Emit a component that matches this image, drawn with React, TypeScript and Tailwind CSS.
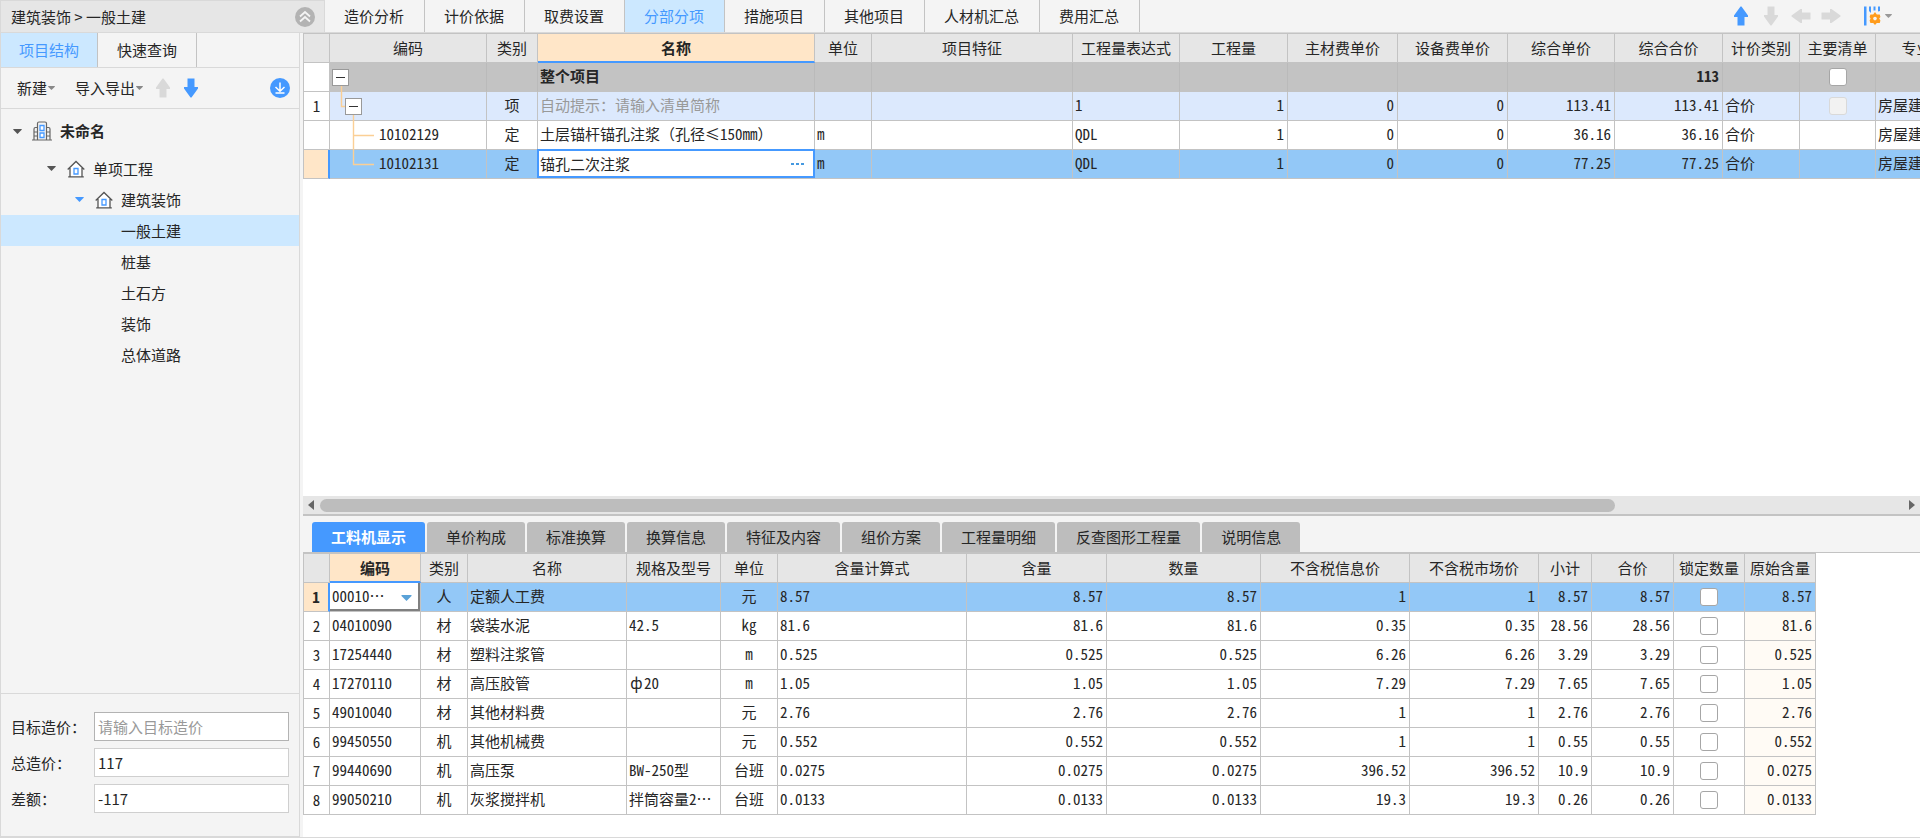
import { useState } from 'react';
import type { ReactNode } from 'react';

type Align = 'left' | 'center' | 'right';

type Column = {
    title: string;
    width: string;
    align: Align;
};

// Column definitions
const billColumns: Column[] = [
    { title: '编码', width: 'w-[157px]', align: 'left' },
    { title: '类别', width: 'w-[51px]', align: 'center' },
    { title: '名称', width: 'w-[277px]', align: 'left' },
    { title: '单位', width: 'w-[57px]', align: 'left' },
    { title: '项目特征', width: 'w-[201px]', align: 'left' },
    { title: '工程量表达式', width: 'w-[107px]', align: 'left' },
    { title: '工程量', width: 'w-[108px]', align: 'right' },
    { title: '主材费单价', width: 'w-[110px]', align: 'right' },
    { title: '设备费单价', width: 'w-[110px]', align: 'right' },
    { title: '综合单价', width: 'w-[107px]', align: 'right' },
    { title: '综合合价', width: 'w-[108px]', align: 'right' },
    { title: '计价类别', width: 'w-[77px]', align: 'left' },
    { title: '主要清单', width: 'w-[76px]', align: 'center' },
    { title: '专业', width: 'w-[82px]', align: 'left' },
];

const detailColumns: Column[] = [
    { title: '编码', width: 'w-[91px]', align: 'left' },
    { title: '类别', width: 'w-[47px]', align: 'center' },
    { title: '名称', width: 'w-[159px]', align: 'left' },
    { title: '规格及型号', width: 'w-[94px]', align: 'left' },
    { title: '单位', width: 'w-[57px]', align: 'center' },
    { title: '含量计算式', width: 'w-[189px]', align: 'left' },
    { title: '含量', width: 'w-[140px]', align: 'right' },
    { title: '数量', width: 'w-[154px]', align: 'right' },
    { title: '不含税信息价', width: 'w-[149px]', align: 'right' },
    { title: '不含税市场价', width: 'w-[129px]', align: 'right' },
    { title: '小计', width: 'w-[53px]', align: 'right' },
    { title: '合价', width: 'w-[82px]', align: 'right' },
    { title: '锁定数量', width: 'w-[71px]', align: 'center' },
    { title: '原始含量', width: 'w-[71px]', align: 'right' },
];

// Table data
const billRows = [
    { no: '', cells: ['', '', '整个项目', '', '', '', '', '', '', '', '113', '', '', ''] },
    { no: '1', cells: ['', '项', '自动提示：请输入清单简称', '', '', '1', '1', '0', '0', '113.41', '113.41', '合价', '', '房屋建筑'] },
    { no: '', cells: ['10102129', '定', '土层锚杆锚孔注浆（孔径≤150mm）', 'm', '', 'QDL', '1', '0', '0', '36.16', '36.16', '合价', '', '房屋建筑'] },
    { no: '', cells: ['10102131', '定', '锚孔二次注浆', 'm', '', 'QDL', '1', '0', '0', '77.25', '77.25', '合价', '', '房屋建筑'] },
];

const detailRows = [
    ['00010…', '人', '定额人工费', '', '元', '8.57', '8.57', '8.57', '1', '1', '8.57', '8.57', '', '8.57'],
    ['04010090', '材', '袋装水泥', '42.5', 'kg', '81.6', '81.6', '81.6', '0.35', '0.35', '28.56', '28.56', '', '81.6'],
    ['17254440', '材', '塑料注浆管', '', 'm', '0.525', '0.525', '0.525', '6.26', '6.26', '3.29', '3.29', '', '0.525'],
    ['17270110', '材', '高压胶管', 'ф20', 'm', '1.05', '1.05', '1.05', '7.29', '7.29', '7.65', '7.65', '', '1.05'],
    ['49010040', '材', '其他材料费', '', '元', '2.76', '2.76', '2.76', '1', '1', '2.76', '2.76', '', '2.76'],
    ['99450550', '机', '其他机械费', '', '元', '0.552', '0.552', '0.552', '1', '1', '0.55', '0.55', '', '0.552'],
    ['99440690', '机', '高压泵', 'BW-250型', '台班', '0.0275', '0.0275', '0.0275', '396.52', '396.52', '10.9', '10.9', '', '0.0275'],
    ['99050210', '机', '灰浆搅拌机', '拌筒容量2…', '台班', '0.0133', '0.0133', '0.0133', '19.3', '19.3', '0.26', '0.26', '', '0.0133'],
];

const mainTabs = ['造价分析', '计价依据', '取费设置', '分部分项', '措施项目', '其他项目', '人材机汇总', '费用汇总'];
const detailTabs = ['工料机显示', '单价构成', '标准换算', '换算信息', '特征及内容', '组价方案', '工程量明细', '反查图形工程量', '说明信息'];
const leaves = ['一般土建', '桩基', '土石方', '装饰', '总体道路'];

const alignClass = {
    left: 'text-left pl-0.5',
    center: 'text-center',
    right: 'text-right pr-[3px]',
};

const line = 'border-[#c3c3c3]';
const gridClass = "w-px table-fixed border-separate border-spacing-0 whitespace-nowrap font-['Noto_Sans_Mono_CJK_SC','Noto_Sans_CJK_SC',monospace] [font-variant-ligatures:none]";

// Icons
const ArrowIcon = ({ className }: { className: string }) => (
    <svg className={`block h-5 w-5 fill-current ${className}`} viewBox="0 0 20 20">
        <path d="M9.5 0.5 H10.5 L17 9.5 V11 H13.5 V19.5 H6.5 V11 H3 V9.5 Z" />
    </svg>
);

const Caret = ({ className }: { className: string }) => (
    <svg className={`block shrink-0 fill-current ${className}`} viewBox="0 0 10 6">
        <path d="M0 0 H10 V1 L5 6 L0 1 Z" />
    </svg>
);

const CollapseIcon = () => (
    <svg className="block h-5 w-5" viewBox="0 0 20 20" fill="none" stroke="#f4f4f4" strokeWidth="1.8">
        <circle cx="10" cy="10" r="10" fill="#b3b3b3" stroke="none" />
        <path d="M5 9.5 L10 5 L15 9.5 M5 14.5 L10 10 L15 14.5" />
    </svg>
);

const DownloadIcon = () => (
    <svg className="block h-5 w-5" viewBox="0 0 20 20" fill="none" stroke="#fff" strokeWidth="1.5">
        <circle cx="10" cy="10" r="10" fill="#4599ff" stroke="none" />
        <path d="M10 4.5 V13 M5.5 9 L10 13.2 L14.5 9 M5.5 15 H14.5" />
    </svg>
);

const BuildingIcon = () => (
    <svg className="block h-5 w-5" viewBox="0 0 20 20" fill="none" stroke="#666" strokeWidth="1.2">
        <path d="M0 19 H20 M5.5 19 V2.5 Q5.5 1 7 1 H13 Q14.5 1 14.5 2.5 V19 M5.5 6.5 H3.5 Q2 6.5 2 8 V19 M14.5 6.5 H16.5 Q18 6.5 18 8 V19" />
        <path d="M2 11 H5 M2 15 H5 M15 11 H18 M15 15 H18" />
        <path d="M8 4.5 H12 V9.5 H8 Z M8 12 H12 V16.5 H8 Z" fill="#fff" stroke="#4599ff" strokeWidth="1.3" />
    </svg>
);

const HouseIcon = () => (
    <svg className="block h-[18px] w-[18px]" viewBox="0 0 18 18" fill="none" stroke="#555" strokeWidth="1.3">
        <path d="M3 8 L9 2 L15 8 V16.8 H3 Z" fill="#fff" stroke="none" />
        <path d="M0.7 9.5 L9 1.5 L17.3 9.5 M3 8 V16.8 M15 8 V16.8 M1.2 16.8 H16.8" />
        <path d="M7 8.5 H11 V14 H7 Z" stroke="#4599ff" strokeWidth="1.3" />
    </svg>
);

const ColumnSettingsIcon = () => (
    <svg className="block h-5 w-[18px]" viewBox="0 0 18 20">
        <path d="M1 0.5 H3.5 V19.5 H1 Z M6 0.5 H8 V7 L6 5 Z M10.5 0.5 H12.5 V4.5 H10.5 Z M15 0.5 H17 V5 L15 5.5 Z" fill="#4599ff" />
        <path d="M12 6 L13.8 8.5 L16.8 8.5 L17.4 11 L16.2 12.6 L17.4 14.5 L16.8 16.9 L13.8 16.9 L12 19 L10.2 16.9 L7.4 16.9 L6.6 14.5 L7.6 12.6 L6.6 11 L7.4 8.5 L10.2 8.5 Z" fill="#ff9c1c" />
        <circle cx="12" cy="12.6" r="1.8" fill="#f4f4f4" />
    </svg>
);

// Top bar with breadcrumb and page tabs
const TopBar = () => {
    const [active, setActive] = useState('分部分项');

    return (
        <header className="flex h-[33px] border-b border-[#d9d9d9] bg-[#f4f4f4]">
            <div className="flex w-[325px] shrink-0 items-center justify-between border border-b-0 border-[#d9d9d9] bg-[#e6e6e6] pl-[10px] pr-[9px]">
                <span>建筑装饰 &gt; 一般土建</span>
                <button aria-label="收起"><CollapseIcon /></button>
            </div>
            <nav className="flex">
                {mainTabs.map((tab) => (
                    <button
                    key={tab}
                    className={`whitespace-nowrap border-r border-[#c3c3c3] pl-[19px] pr-5 ${tab === active ? 'bg-[#cce8ff] text-[#4599ff]' : ''}`}
                    onClick={() => setActive(tab)}
                    >
                        {tab}
                    </button>
                ))}
            </nav>
            <div className="ml-auto flex items-center gap-[10px] pr-7 text-[#d9d9d9]">
                <button aria-label="上移"><ArrowIcon className="text-[#4599ff]" /></button>
                <button aria-label="下移"><ArrowIcon className="rotate-180" /></button>
                <button aria-label="左移"><ArrowIcon className="-rotate-90" /></button>
                <button aria-label="右移"><ArrowIcon className="rotate-90" /></button>
                <button aria-label="列设置" className="ml-3 flex items-center gap-1">
                    <ColumnSettingsIcon />
                    <Caret className="h-1 w-[7px] text-[#999]" />
                </button>
            </div>
        </header>
    );
};

const PriceField = ({ id, label, value, placeholder }: { id: string; label: string; value?: string; placeholder?: string }) => (
    <div className="flex items-center">
        <label htmlFor={id} className="w-[83px] shrink-0">{label}</label>
        <input
        id={id}
        defaultValue={value}
        placeholder={placeholder}
        className={`h-[29px] min-w-0 flex-1 border bg-white px-[3px] outline-none placeholder:text-[#999] ${placeholder ? 'border-[#b3b3b3]' : 'border-[#cfcfcf]'}`}
        />
    </div>
);

// Left panel
const Sidebar = () => {
    const [selected, setSelected] = useState('一般土建');

    return (
        <aside className="flex w-[300px] shrink-0 flex-col border border-t-0 border-[#d9d9d9]">
            <div className="flex h-[34px]">
                <button className="w-[97px] border-r border-[#c3c3c3] bg-[#cce8ff] text-[#4599ff]">项目结构</button>
                <button className="w-[99px] border-r border-[#c3c3c3]">快速查询</button>
            </div>
            <div className="flex h-[42px] items-center border-y border-[#d9d9d9] pl-4 pr-[9px]">
                <button className="flex items-center gap-px">新建<Caret className="h-1 w-[7px] text-[#888]" /></button>
                <button className="ml-5 flex items-center gap-px">导入导出<Caret className="h-1 w-[7px] text-[#888]" /></button>
                <button aria-label="上移" className="ml-[10px]"><ArrowIcon className="text-[#d9d9d9]" /></button>
                <button aria-label="下移" className="ml-2"><ArrowIcon className="rotate-180 text-[#4599ff]" /></button>
                <button aria-label="下载" className="ml-auto"><DownloadIcon /></button>
            </div>

            <ul className="flex-1">
                <li className="flex h-11 items-center pl-3">
                    <Caret className="h-[5px] w-[9px] text-[#555]" />
                    <span className="ml-[10px] mr-2"><BuildingIcon /></span>
                    <span className="font-bold">未命名</span>
                </li>
                <li className="flex h-[31px] items-center pl-[46px]">
                    <Caret className="h-[5px] w-[9px] text-[#555]" />
                    <span className="ml-[11px] mr-2"><HouseIcon /></span>
                    单项工程
                </li>
                <li className="flex h-[31px] items-center pl-[74px]">
                    <Caret className="h-[5px] w-[9px] text-[#4599ff]" />
                    <span className="ml-[11px] mr-2"><HouseIcon /></span>
                    建筑装饰
                </li>
                {leaves.map((leaf) => (
                    <li key={leaf}>
                        <button
                        className={`h-[31px] w-full pl-[120px] text-left ${leaf === selected ? 'bg-[#cce8ff]' : ''}`}
                        onClick={() => setSelected(leaf)}
                        >
                            {leaf}
                        </button>
                    </li>
                ))}
            </ul>

            <div className="space-y-[7px] border-t border-[#d9d9d9] pb-[23px] pl-[10px] pr-[10px] pt-[18px]">
                <PriceField id="target" label="目标造价：" placeholder="请输入目标造价" />
                <PriceField id="total" label="总造价：" value="117" />
                <PriceField id="diff" label="差额：" value="-117" />
            </div>
        </aside>
    );
};

const Checkbox = ({ label, disabled }: { label: string; disabled?: boolean }) => (
    <input
    type="checkbox"
    aria-label={label}
    disabled={disabled}
    className="mx-auto block h-[18px] w-[18px] appearance-none rounded-[3px] border border-[#a6a6a6] bg-white checked:bg-[#4599ff] disabled:border-[#d9d9d9] disabled:bg-[#f2f2f2]"
    />
);

// Shared head of both grids
const GridHead = ({ columns, active }: { columns: Column[]; active: string }) => (
    <>
        <colgroup>
            <col className="w-[27px]" />
            {columns.map((col) => <col key={col.title} className={col.width} />)}
        </colgroup>
        <thead>
            <tr className="h-[30px] bg-[#e6e6e6]">
                <th className={`border ${line}`} aria-label="序号"></th>
                {columns.map((col) => (
                    <th
                    key={col.title}
                    className={`border-t border-r p-0 ${line} ${col.title === active ? 'border-b-2 border-b-[#4599ff] bg-[#ffe6c8] font-bold' : 'border-b font-normal'}`}
                    >
                        {col.title}
                    </th>
                ))}
            </tr>
        </thead>
    </>
);

// Branch lines of the code column, one drawing per row
const branches = [
    'M11.5 22 V29',
    'M11.5 0 V14.5 H15 M23.5 22 V29',
    'M23.5 0 V29 M23.5 14.5 H44',
    'M23.5 0 V14.5 H44',
];

const CodeCell = ({ row, code }: { row: number; code: string }) => (
    <div className="relative flex h-7 items-center">
        <svg className="absolute left-0 top-0 h-[29px] w-[45px]" viewBox="0 0 45 29" fill="none" stroke="#fbcf95" strokeWidth="1.4">
            <path d={branches[row]} />
        </svg>
        {row < 2 && (
            <button
            aria-label="折叠"
            className={`relative flex h-[17px] w-[17px] items-center justify-center border border-[#999] bg-white ${row === 0 ? 'ml-0.5' : 'ml-[15px]'}`}
            >
                <span className="h-px w-[9px] bg-[#333]"></span>
            </button>
        )}
        {code && <span className="pb-0.5 pl-[49px]">{code}</span>}
    </div>
);

const rowColors = ['bg-[#c3c3c3] font-bold', 'bg-[#dce9fd]', 'bg-white', 'bg-[#93c8f7]'];

// Upper grid
const BillGrid = () => {
    const isBare = (row: number, col: number) => col === 0 || (col === 2 && row === 3) || col === 12;

    const renderCell = (row: number, col: number, text: string): ReactNode => {
        if (col === 0) return <CodeCell row={row} code={text} />;
        if (col === 2 && row === 3) {
            return (
                <div className="relative -m-px mb-0 flex h-[29px] items-center border-2 border-[#4599ff] bg-white">
                    <input aria-label="名称" defaultValue={text} className="min-w-0 flex-1 pl-px outline-none" />
                    <button aria-label="更多" className="mr-[9px] flex gap-0.5">
                        <span className="h-0.5 w-[3px] bg-[#4599e0]"></span>
                        <span className="h-0.5 w-[3px] bg-[#4599e0]"></span>
                        <span className="h-0.5 w-[3px] bg-[#4599e0]"></span>
                    </button>
                </div>
            );
        }
        if (col === 12 && row < 2) return <Checkbox label="主要清单" disabled={row === 1} />;
        return text;
    };

    return (
        <div className="flex-1 overflow-hidden bg-white">
            <table className={gridClass}>
                <GridHead columns={billColumns} active="名称" />
                <tbody>
                    {billRows.map((row, r) => (
                        <tr key={r} className={`h-[29px] ${rowColors[r]}`}>
                            <td className={`border-x border-b p-0 text-center ${line} ${r === 3 ? 'border-r-2 border-r-[#4599ff] bg-[#ffe6c8]' : 'bg-white'}`}>{row.no}</td>
                            {row.cells.map((text, c) => (
                                <td
                                key={c}
                                className={`border-b border-r ${r === 0 ? 'border-r-[#bababa] border-b-[#c3c3c3]' : line} ${isBare(r, c) ? 'p-0' : `pb-0.5 pt-0 ${alignClass[billColumns[c].align]}`} ${r === 1 && c === 2 ? 'text-[#999]' : ''}`}
                                >
                                    {renderCell(r, c, text)}
                                </td>
                            ))}
                        </tr>
                    ))}
                </tbody>
            </table>
        </div>
    );
};

const ScrollBar = () => (
    <div className="flex h-5 items-center border-b-2 border-[#c3c3c3] bg-[#e6e6e6] px-[5px]">
        <svg className="h-[10px] w-[6px] fill-[#666]" viewBox="0 0 6 10"><path d="M6 0 V10 L0 5 Z" /></svg>
        <div className="mx-[6px] flex-1">
            <div className="h-[13px] w-9/11 rounded-full bg-[#bdbdbd]"></div>
        </div>
        <svg className="h-[10px] w-[6px] fill-[#666]" viewBox="0 0 6 10"><path d="M0 0 V10 L6 5 Z" /></svg>
    </div>
);

// Lower grid
const DetailGrid = () => {
    const renderCell = (row: number, col: number, text: string): ReactNode => {
        if (col === 0 && row === 0) {
            return (
                <div className="relative h-7">
                    <select aria-label="编码" className="h-7 w-full appearance-none border-b-2 border-r-2 border-[#808080] bg-white pl-0.5 outline-none">
                        <option>{text}</option>
                    </select>
                    <Caret className="pointer-events-none absolute right-2 top-3 h-[6px] w-[11px] text-[#5aa2d8]" />
                </div>
            );
        }
        if (col === 12) return <Checkbox label="锁定数量" />;
        // The diameter sign takes a full character cell
        if (text.startsWith('ф')) return <><span className="inline-block w-[15px] text-center">ф</span>{text.slice(1)}</>;
        return text;
    };

    return (
        <div className="overflow-hidden border-t border-[#c3c3c3] bg-white pb-[22px]">
            <table className={gridClass}>
                <GridHead columns={detailColumns} active="编码" />
                <tbody>
                    {detailRows.map((row, r) => (
                        <tr key={r} className={`h-[29px] ${r === 0 ? 'bg-[#93c8f7]' : 'bg-white'}`}>
                            <td className={`border-x border-b p-0 text-center ${line} ${r === 0 ? 'border-r-2 border-r-[#4599ff] bg-[#ffe6c8] font-bold' : ''}`}>{r + 1}</td>
                            {row.map((text, c) => (
                                <td
                                key={c}
                                className={`border-b border-r ${line} ${(c === 0 && r === 0) || c === 12 ? 'p-0' : `pb-0.5 pt-0 ${alignClass[detailColumns[c].align]}`} ${c === 13 && r > 0 ? 'bg-[#fffbf5]' : ''}`}
                                >
                                    {renderCell(r, c, text)}
                                </td>
                            ))}
                        </tr>
                    ))}
                </tbody>
            </table>
        </div>
    );
};

const DetailTabs = () => {
    const [active, setActive] = useState('工料机显示');

    return (
        <nav className="flex h-9 gap-0.5 pl-[9px] pt-[6px]">
            {detailTabs.map((tab) => (
                <button
                key={tab}
                className={`whitespace-nowrap rounded-t-[3px] px-[19px] ${tab === active ? 'bg-[#4599ff] font-bold text-white' : 'bg-[#bdbdbd]'}`}
                onClick={() => setActive(tab)}
                >
                    {tab}
                </button>
            ))}
        </nav>
    );
};

const App = () => {
    return (
        <div lang="zh-CN" className="flex min-h-screen flex-col bg-[#f4f4f4] font-['Noto_Sans_CJK_SC',sans-serif] text-[15px] leading-5 text-[#262626]">
            <TopBar />
            <main className="flex flex-1 gap-[3px] border-b border-[#d9d9d9]">
                <Sidebar />
                <section className="flex min-w-0 flex-1 flex-col">
                    <BillGrid />
                    <ScrollBar />
                    <DetailTabs />
                    <DetailGrid />
                </section>
            </main>
        </div>
    );
};

export default App;
